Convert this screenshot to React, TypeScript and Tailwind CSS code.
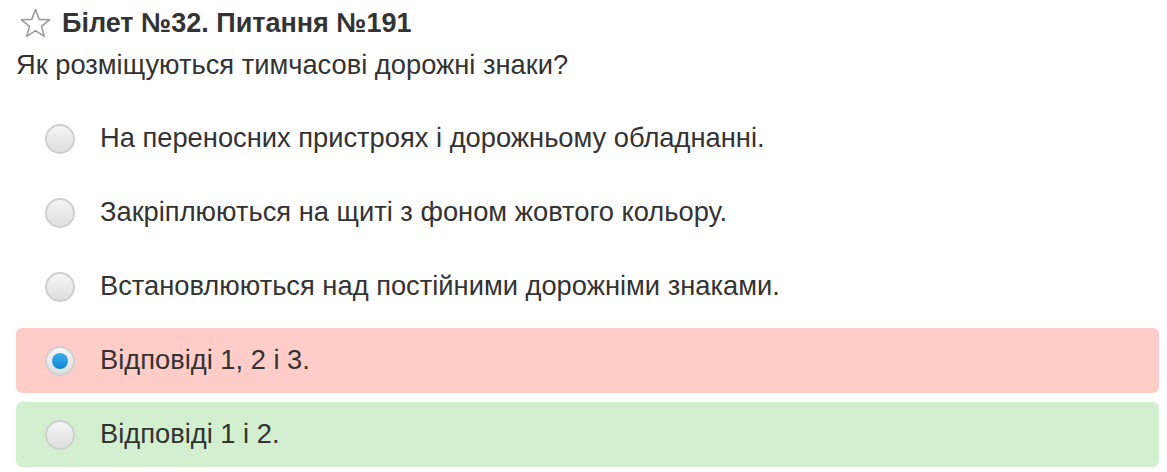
const answers = [
  { text: "На переносних пристроях і дорожньому обладнанні.", state: "none" },
  { text: "Закріплюються на щиті з фоном жовтого кольору.", state: "none" },
  { text: "Встановлюються над постійними дорожніми знаками.", state: "none" },
  { text: "Відповіді 1, 2 і 3.", state: "wrong" },
  { text: "Відповіді 1 і 2.", state: "right" },
];

function Star() {
  return (
    <svg width="33" height="33" viewBox="0 0 32 32" className="shrink-0">
      <path
        d="M16 2.5 L19.6 12 L29.6 12.4 L21.8 18.7 L24.5 28.5 L16 22.9 L7.5 28.5 L10.2 18.7 L2.4 12.4 L12.4 12 Z"
        fill="none"
        stroke="#9a9a9a"
        strokeWidth="1.5"
        strokeLinejoin="round"
      />
    </svg>
  );
}

function Radio({ checked }: { checked: boolean }) {
  return (
    <span className="w-[30px] h-[30px] rounded-full border-2 border-[#cfcfcf] bg-gradient-to-b from-[#f6f6f6] to-[#dedede] flex items-center justify-center shrink-0">
      {checked && (
        <span className="w-[16px] h-[16px] rounded-full bg-gradient-to-b from-[#3ab0f0] to-[#0a84d4]" />
      )}
    </span>
  );
}

export default function App() {
  return (
    <div className="w-[1167px] h-[472px] bg-white font-['Liberation_Sans',Arial,sans-serif] text-[#333333] pl-4 pr-2 pt-[5px]">
      <h2 className="flex items-center gap-[10px] pl-[3px] text-[27px] font-bold leading-[36px]">
        <Star />
        <span>Білет №32. Питання №191</span>
      </h2>
      <p className="text-[27.3px] leading-[36px] mt-[6px]">Як розміщуються тимчасові дорожні знаки?</p>
      <div className="flex flex-col gap-[9px] mt-[23px]">
        {answers.map((a) => (
          <div
            key={a.text}
            className={
              "h-[65px] rounded-[6px] flex items-center gap-[25px] pl-[29px] text-[27.3px] " +
              (a.state === "wrong" ? "bg-[#ffcdc8]" : a.state === "right" ? "bg-[#d2f0cf]" : "")
            }
          >
            <Radio checked={a.state === "wrong"} />
            <span>{a.text}</span>
          </div>
        ))}
      </div>
    </div>
  );
}
